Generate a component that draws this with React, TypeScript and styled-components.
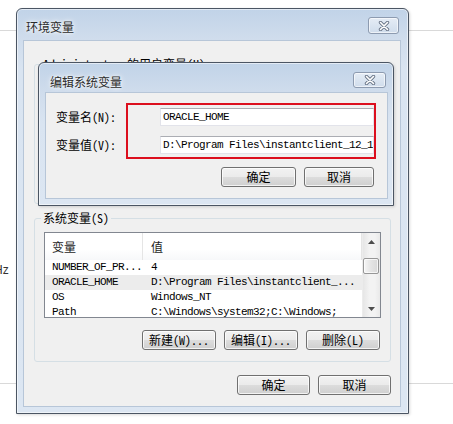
import React from 'react'
import styled, { createGlobalStyle } from 'styled-components'

const cjk = `'Noto Sans Mono CJK SC', 'Noto Sans CJK SC', sans-serif`
const mono = `'Liberation Mono', 'DejaVu Sans Mono', monospace`

const GlobalStyle = createGlobalStyle`
	html, body {
		margin: 0;
		padding: 0;
		background: #fff;
	}
	body {
		width: 453px;
		height: 424px;
		overflow: hidden;
		font-family: ${cjk};
		font-size: 12px;
		color: #000;
	}
`

const Desktop = styled.div`
	position: relative;
	width: 453px;
	height: 424px;
	overflow: hidden;
	background: #fff;
`

const Rule = styled.div<{ $top: number }>`
	position: absolute;
	left: 0;
	right: 0;
	top: ${(p) => p.$top}px;
	height: 1px;
	background: #d9d9d9;
`

const StrayText = styled.span`
	position: absolute;
	left: -6px;
	top: 263px;
	font: 12px 'Liberation Sans', Arial, sans-serif;
	color: #333;
`

const Frame = styled.div<{ $x: number; $y: number; $w: number; $h: number; $pad: string }>`
	position: absolute;
	left: ${(p) => p.$x}px;
	top: ${(p) => p.$y}px;
	width: ${(p) => p.$w}px;
	height: ${(p) => p.$h}px;
	box-sizing: border-box;
	display: flex;
	flex-direction: column;
	padding: ${(p) => p.$pad};
	border: 1px solid #4b5563;
	border-radius: 6px 6px 0 0;
	background: linear-gradient(to bottom, #c1d3e8 0px, #cfdcec 28px, #d9e4f1 60px, #dce6f2 100%);
	box-shadow: inset 0 0 0 1px rgba(255, 255, 255, 0.55), 1px 1px 3px rgba(0, 0, 0, 0.15);
`

const TitleBar = styled.div<{ $h: number }>`
	flex: none;
	height: ${(p) => p.$h}px;
	display: flex;
	align-items: flex-start;
	justify-content: space-between;
`

const Title = styled.span<{ $dx: number; $dy: number }>`
	margin-left: ${(p) => p.$dx}px;
	margin-top: ${(p) => p.$dy}px;
	font-family: 'Noto Sans CJK SC', sans-serif;
	font-size: 12px;
	line-height: 16px;
	color: #2b2b2b;
	text-shadow: 0 0 6px #fff, 0 0 3px #fff;
`

const CloseBtn = styled.div<{ $w: number; $h: number; $dy: number }>`
	width: ${(p) => p.$w}px;
	height: ${(p) => p.$h}px;
	margin-top: ${(p) => p.$dy}px;
	margin-right: 2px;
	box-sizing: border-box;
	display: flex;
	align-items: center;
	justify-content: center;
	border: 1px solid #8d9bb0;
	border-radius: 3px;
	background: linear-gradient(to bottom, rgba(255, 255, 255, 0.55), rgba(210, 222, 236, 0.5));
	box-shadow: inset 0 0 0 1px rgba(255, 255, 255, 0.6);
`

const Client = styled.div<{ $pad: string }>`
	flex: 1;
	min-height: 0;
	box-sizing: border-box;
	display: flex;
	flex-direction: column;
	padding: ${(p) => p.$pad};
	background: #f0f0f0;
	border: 1px solid #b7c6d8;
`

const Group = styled.fieldset<{ $h: number; $pb: number; $mb: number }>`
	flex: none;
	margin: 0 0 ${(p) => p.$mb}px;
	min-width: 0;
	height: ${(p) => p.$h}px;
	box-sizing: border-box;
	display: flex;
	flex-direction: column;
	padding: 6px 9px ${(p) => p.$pb}px;
	border: 1px solid #d5dfe5;
	border-radius: 3px;
`

const Legend = styled.legend`
	margin-left: -3px;
	padding: 0 2px;
	font-size: 12px;
	line-height: 16px;
	color: #000;
`

const ListBox = styled.div`
	flex: none;
	height: 86px;
	box-sizing: border-box;
	display: flex;
	border: 1px solid #828790;
	background: #fff;
	overflow: hidden;
`

const ListMain = styled.div`
	flex: 1;
	min-width: 0;
	display: flex;
	flex-direction: column;
`

const HeaderRow = styled.div`
	flex: none;
	height: 27px;
	display: grid;
	grid-template-columns: 98px 1fr;
	background: linear-gradient(to bottom, #ffffff 0%, #ffffff 60%, #f7f8fa 100%);
`

const HeaderCell = styled.div<{ $pl: number }>`
	display: flex;
	align-items: center;
	padding-left: ${(p) => p.$pl}px;
	font-size: 12px;
	color: #1e1e1e;
	border-right: 1px solid #e5e5e5;
`

const Row = styled.div<{ $selected?: boolean }>`
	flex: none;
	height: 15px;
	display: grid;
	grid-template-columns: 98px 1fr;
	background: ${(p) => (p.$selected ? '#ececec' : 'transparent')};
`

const Cell = styled.div<{ $pl: number }>`
	padding-left: ${(p) => p.$pl}px;
	font-family: ${mono};
	font-size: 11px;
	letter-spacing: -0.6px;
	line-height: 15px;
	white-space: nowrap;
	overflow: hidden;
	color: #000;
`

const ScrollBar = styled.div`
	flex: none;
	width: 17px;
	display: flex;
	flex-direction: column;
	background: linear-gradient(to right, #e6e6e6, #f3f3f3 40%, #f3f3f3 70%, #e9e9e9);
	border-left: 1px solid #ececec;
`

const ArrowBtn = styled.div`
	flex: none;
	height: 17px;
	display: flex;
	align-items: center;
	justify-content: center;
`

const Track = styled.div`
	flex: 1;
	display: flex;
	flex-direction: column;
	padding: 8px 1px 0 0;
`

const Thumb = styled.div`
	height: 16px;
	box-sizing: border-box;
	border: 1px solid #979797;
	border-radius: 2px;
	background: linear-gradient(to right, #f6f6f6, #e4e4e4 50%, #d9d9d9);
	box-shadow: inset 0 0 0 1px rgba(255, 255, 255, 0.7);
`

const ButtonRow = styled.div<{ $mt: number; $pr?: number }>`
	flex: none;
	margin-top: ${(p) => p.$mt}px;
	padding-right: ${(p) => p.$pr ?? 0}px;
	display: flex;
	justify-content: flex-end;
	gap: 8px;
`

const Button = styled.div<{ $w: number }>`
	width: ${(p) => p.$w}px;
	height: 20px;
	box-sizing: border-box;
	display: flex;
	align-items: center;
	justify-content: center;
	border: 1px solid #707070;
	border-radius: 3px;
	background: linear-gradient(to bottom, #f2f2f2 0%, #ebebeb 50%, #dddddd 50%, #cfcfcf 100%);
	box-shadow: inset 0 0 0 1px rgba(255, 255, 255, 0.75);
	font-size: 12px;
	line-height: 16px;
	color: #000;
`

const Form = styled.div`
	display: grid;
	grid-template-columns: 104px 214px;
	row-gap: 10px;
	align-items: center;
`

const Label = styled.span`
	font-size: 12px;
	line-height: 16px;
	color: #000;
`

const TextBox = styled.div`
	height: 18px;
	box-sizing: border-box;
	padding-left: 2px;
	display: flex;
	align-items: center;
	background: #fff;
	border: 1px solid #e2e3ea;
	border-top-color: #abadb3;
	font-family: ${mono};
	font-size: 11px;
	letter-spacing: -0.6px;
	white-space: nowrap;
	overflow: hidden;
	color: #000;
`

const Highlight = styled.div`
	position: absolute;
	left: 126px;
	top: 103px;
	width: 250px;
	height: 56px;
	box-sizing: border-box;
	border: 2px solid #dc0f1e;
	pointer-events: none;
`

const CloseIcon = () => (
	<svg width='12' height='10' viewBox='0 0 12 10'>
		<path d='M2.5 1.5 L9.5 8.5 M9.5 1.5 L2.5 8.5' stroke='#6b7789' strokeWidth='3.4' strokeLinecap='round' />
		<path d='M2.5 1.5 L9.5 8.5 M9.5 1.5 L2.5 8.5' stroke='#fff' strokeWidth='1.6' strokeLinecap='round' />
	</svg>
)

const Arrow = ({ up }: { up?: boolean }) => (
	<svg width='7' height='4' viewBox='0 0 7 4'>
		<path d={up ? 'M0 4 L3.5 0 L7 4 Z' : 'M0 0 L3.5 4 L7 0 Z'} fill='#4d4d4d' />
	</svg>
)

type Variable = { name: string; value: string; selected?: boolean }

const systemVars: Variable[] = [
	{ name: 'NUMBER_OF_PR...', value: '4' },
	{ name: 'ORACLE_HOME', value: 'D:\\Program Files\\instantclient_...', selected: true },
	{ name: 'OS', value: 'Windows_NT' },
	{ name: 'Path', value: 'C:\\Windows\\system32;C:\\Windows;' },
]

const VariableList = ({ items }: { items: Variable[] }) => (
	<ListBox>
		<ListMain>
			<HeaderRow>
				<HeaderCell $pl={7}>变量</HeaderCell>
				<HeaderCell $pl={8}>值</HeaderCell>
			</HeaderRow>
			{items.map((v) => (
				<Row key={v.name} $selected={v.selected}>
					<Cell $pl={7}>{v.name}</Cell>
					<Cell $pl={8}>{v.value}</Cell>
				</Row>
			))}
		</ListMain>
		<ScrollBar>
			<ArrowBtn>
				<Arrow up />
			</ArrowBtn>
			<Track>
				<Thumb />
			</Track>
			<ArrowBtn>
				<Arrow />
			</ArrowBtn>
		</ScrollBar>
	</ListBox>
)

export default function App() {
	return (
		<Desktop>
			<GlobalStyle />
			<Rule $top={30} />
			<Rule $top={383} />
			<StrayText>Hz</StrayText>

			<Frame $x={16} $y={8} $w={393} $h={406} $pad='0 7px 6px 6px'>
				<TitleBar $h={31}>
					<Title $dx={3} $dy={10}>环境变量</Title>
					<CloseBtn $w={31} $h={17} $dy={8}>
						<CloseIcon />
					</CloseBtn>
				</TitleBar>
				<Client $pad='15px 9px 11px 10px'>
					{/* user variables: covered by the edit dialog */}
					<Group $h={148} $pb={10} $mb={6}>
						<Legend>Administrator 的用户变量(U)</Legend>
					</Group>
					<Group $h={152} $pb={12} $mb={0}>
						<Legend>系统变量(S)</Legend>
						<VariableList items={systemVars} />
						<ButtonRow $mt={12} $pr={1}>
							<Button $w={74}>新建(W)...</Button>
							<Button $w={74}>编辑(I)...</Button>
							<Button $w={74}>删除(L)</Button>
						</ButtonRow>
					</Group>
					<ButtonRow $mt={13}>
						<Button $w={73}>确定</Button>
						<Button $w={73}>取消</Button>
					</ButtonRow>
				</Client>
			</Frame>

			<Frame $x={38} $y={62} $w={356} $h={144} $pad='0 5px 6px 6px'>
				<TitleBar $h={29}>
					<Title $dx={5} $dy={11}>编辑系统变量</Title>
					<CloseBtn $w={33} $h={16} $dy={9}>
						<CloseIcon />
					</CloseBtn>
				</TitleBar>
				<Client $pad='15px 13px 11px 10px'>
					<Form>
						<Label>变量名(N):</Label>
						<TextBox>ORACLE_HOME</TextBox>
						<Label>变量值(V):</Label>
						<TextBox>D:\Program Files\instantclient_12_1</TextBox>
					</Form>
					<ButtonRow $mt={13}>
						<Button $w={75}>确定</Button>
						<Button $w={70}>取消</Button>
					</ButtonRow>
				</Client>
			</Frame>

			<Highlight />
		</Desktop>
	)
}
